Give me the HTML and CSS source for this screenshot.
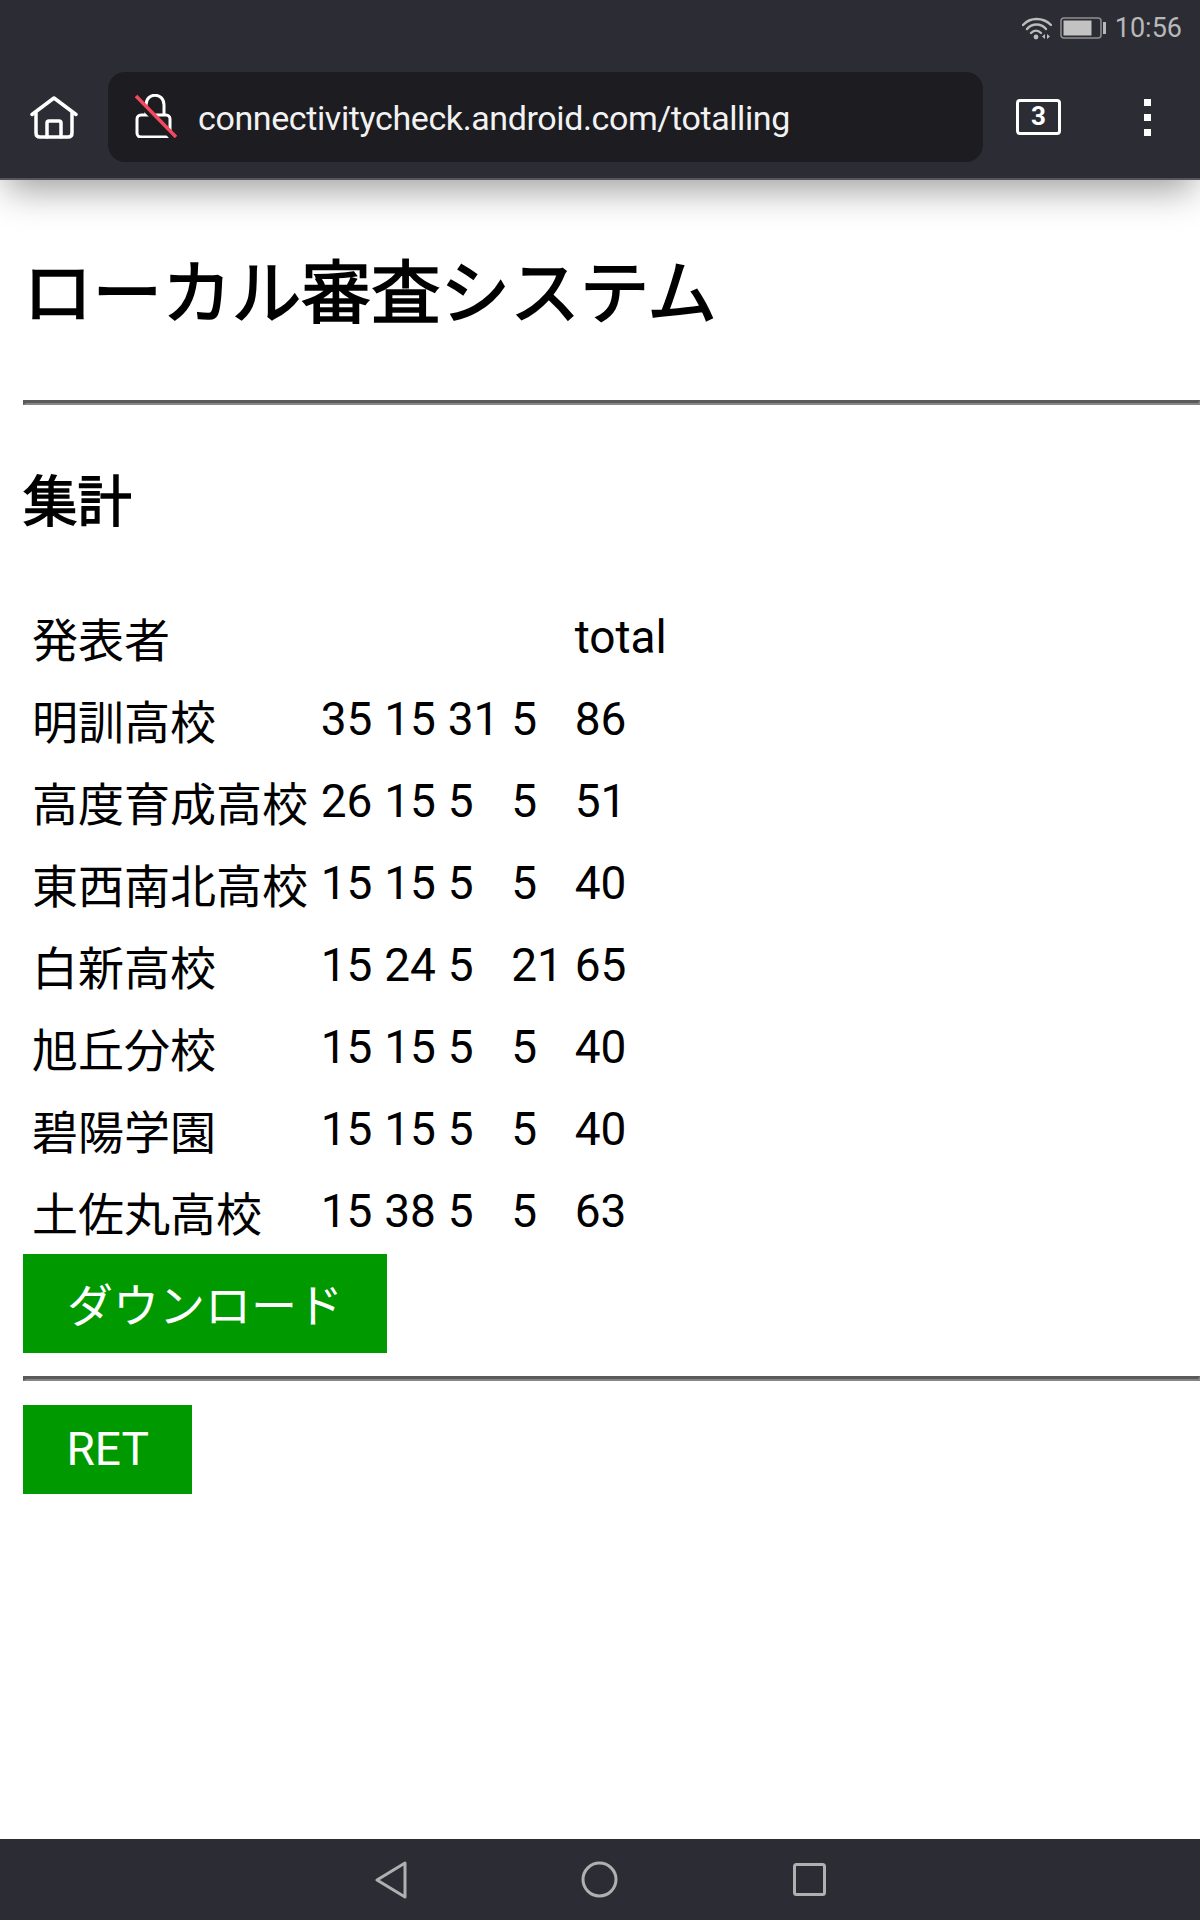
FILE: index.html
```html
<!DOCTYPE html>
<html lang="ja">
<head>
<meta charset="utf-8">
<title>ローカル審査システム</title>
<link rel="stylesheet" href="styles.css">
</head>
<body>
<header class="chrome">
  <div class="status">
    <svg class="wifi" viewBox="0 0 30 24" width="30" height="24" fill="none" stroke="#bcbcbc" stroke-width="2.400" stroke-linecap="round">
      <path d="M1 9C8 1 21 1 29 9"/>
      <path d="M5 13C10 7 19 7 24 13"/>
      <path d="M9 17C12 14 16 14 19 17"/>
      <circle cx="14" cy="21" r="2.400" fill="#bcbcbc" stroke="none"/>
      <path d="M23 18v5l-3-2.500zM25 18v5l3-2.500z" fill="#bcbcbc" stroke="none"/>
    </svg>
    <svg class="battery" viewBox="0 0 46 22" width="46" height="22">
      <rect x="1" y="1" width="40" height="20" rx="3" fill="none" stroke="#8e8e92" stroke-width="1.500"/>
      <rect x="3.500" y="3.500" width="28" height="15" fill="#c2c2c2"/>
      <rect x="43" y="5" width="3" height="12" fill="#b8b8b8"/>
    </svg>
    <span class="clock">10:56</span>
  </div>
  <div class="toolbar">
    <svg class="home" viewBox="0 0 48 43" width="48" height="43" fill="none" stroke="#fff" stroke-width="3.500" stroke-linejoin="round" stroke-linecap="round">
      <path d="M2 18.500L24 2 46 18.500"/>
      <path d="M6 17V37Q6 41 10 41H38Q42 41 42 37V17"/>
      <path d="M17 41V27Q17 25 19 25H29Q31 25 31 27V41"/>
    </svg>
    <div class="urlbar">
      <svg class="lock" viewBox="0 0 42 44" width="42" height="44" fill="none">
        <rect x="2" y="21" width="33" height="22" rx="4" stroke="#fff" stroke-width="3"/>
        <path d="M11 21V11C11 -2 29 -2 29 11V21" stroke="#fff" stroke-width="3"/>
        <path d="M0 4L40 46" stroke="#1c1c21" stroke-width="6"/>
        <path d="M1 2L41 43" stroke="#f2495f" stroke-width="3.500"/>
      </svg>
      <span class="url">connectivitycheck.android.com/totalling</span>
    </div>
    <div class="tabs">3</div>
    <div class="menu"><i></i><i></i><i></i></div>
  </div>
</header>
<main class="page">
  <h1>ローカル審査システム</h1>
  <hr>
  <h2>集計</h2>
  <table>
    <tr><td>発表者</td><td></td><td></td><td></td><td></td><td>total</td></tr>
    <tr><td>明訓高校</td><td>35</td><td>15</td><td>31</td><td>5</td><td>86</td></tr>
    <tr><td>高度育成高校</td><td>26</td><td>15</td><td>5</td><td>5</td><td>51</td></tr>
    <tr><td>東西南北高校</td><td>15</td><td>15</td><td>5</td><td>5</td><td>40</td></tr>
    <tr><td>白新高校</td><td>15</td><td>24</td><td>5</td><td>21</td><td>65</td></tr>
    <tr><td>旭丘分校</td><td>15</td><td>15</td><td>5</td><td>5</td><td>40</td></tr>
    <tr><td>碧陽学園</td><td>15</td><td>15</td><td>5</td><td>5</td><td>40</td></tr>
    <tr><td>土佐丸高校</td><td>15</td><td>38</td><td>5</td><td>5</td><td>63</td></tr>
  </table>
  <a class="btn btn-dl" href="#">ダウンロード</a>
  <hr class="hr2">
  <a class="btn btn-ret" href="#">RET</a>
</main>
<footer class="navbar">
  <svg viewBox="0 0 32 38" width="32" height="38" fill="none" stroke="#b0b0b0" stroke-width="3" stroke-linejoin="round"><path d="M2 19L30 2V36Z"/></svg>
  <svg viewBox="0 0 37 37" width="37" height="37" fill="none" stroke="#b0b0b0" stroke-width="3"><circle cx="18.500" cy="18.500" r="16.500"/></svg>
  <svg viewBox="0 0 33 33" width="33" height="33" fill="none" stroke="#b0b0b0" stroke-width="3" stroke-linejoin="round"><rect x="1.500" y="1.500" width="30" height="30" rx="2"/></svg>
</footer>
</body>
</html>
```
FILE: styles.css
```css
* { box-sizing: border-box; }
html, body { margin: 0; padding: 0; }
body {
  width: 1200px;
  height: 1920px;
  overflow: hidden;
  display: flex;
  flex-direction: column;
  background: #fff;
  color: #000;
  font-family: Roboto, "Noto Sans CJK JP", sans-serif;
}
.chrome {
  position: relative;
  z-index: 1;
  height: 180px;
  background: #2c2c35;
  border-bottom: 2px solid #55555c;
  box-shadow: 0 16px 34px -6px rgba(0, 0, 0, .38);
  flex: none;
}
.status {
  height: 72px;
  display: flex;
  align-items: center;
  justify-content: flex-end;
  padding: 0 18px 16px 0;
}
.wifi { margin-right: 8px; }
.battery { margin-right: 9px; }
.clock { color: #b8b8b8; font-size: 27px; line-height: 32px; }
.toolbar {
  height: 90px;
  display: flex;
  align-items: center;
  padding-left: 30px;
}
.home { flex: none; margin-right: 30px; }
.urlbar {
  width: 875px;
  height: 90px;
  background: #1c1c21;
  border-radius: 17px;
  display: flex;
  align-items: center;
  padding-left: 27px;
  flex: none;
}
.lock { flex: none; margin-right: 21px; margin-top: -2px; }
.url { color: #f2f2f2; font-size: 34px; letter-spacing: -.39px; white-space: nowrap; padding-top: 2px; }
.tabs {
  margin-left: 33px;
  width: 45px;
  height: 36px;
  border: 3.500px solid #fff;
  border-radius: 4px;
  color: #fff;
  font-size: 26px;
  font-weight: 700;
  line-height: 29px;
  text-align: center;
  flex: none;
}
.menu {
  margin-left: 83px;
  width: 7px;
  display: flex;
  flex-direction: column;
  gap: 8px;
}
.menu i { display: block; width: 7px; height: 7px; background: #fff; }
.page { flex: 1; padding: 0 0 0 23px; min-height: 0; }
h1 { margin: 57px 0 62px; font-size: 69.600px; font-weight: 400; -webkit-text-stroke: 1.600px #000; }
h2 { margin: 53px 0 56.500px; font-size: 54.400px; font-weight: 400; -webkit-text-stroke: 1.400px #000; }
hr {
  margin: 0;
  height: 5px;
  border-style: solid;
  border-width: 3px 2px 2px 3px;
  border-color: #5a5a5a #868686 #868686 #5a5a5a;
}
table { border-spacing: 6px 4px; font-size: 46px; }
td { padding: 6.050px 2.875px; white-space: nowrap; }
td:first-child { padding-right: 4px; }
.btn {
  display: table;
  background: #090;
  color: #fff;
  font-size: 46px;
  text-decoration: none;
  padding: 0 44px;
}
.btn-dl { height: 99px; line-height: 94px; padding-top: 5px; }
.hr2 { margin: 23px 0 24px; }
.btn-ret { height: 89px; line-height: 89px; padding: 0 43.500px; }
.navbar {
  height: 81px;
  background: #2c2c35;
  flex: none;
  display: flex;
  align-items: center;
  justify-content: center;
  position: relative;
}
.navbar svg:nth-child(1) { margin-right: 174px; }
.navbar svg:nth-child(2) { margin-right: 175px; }
```
